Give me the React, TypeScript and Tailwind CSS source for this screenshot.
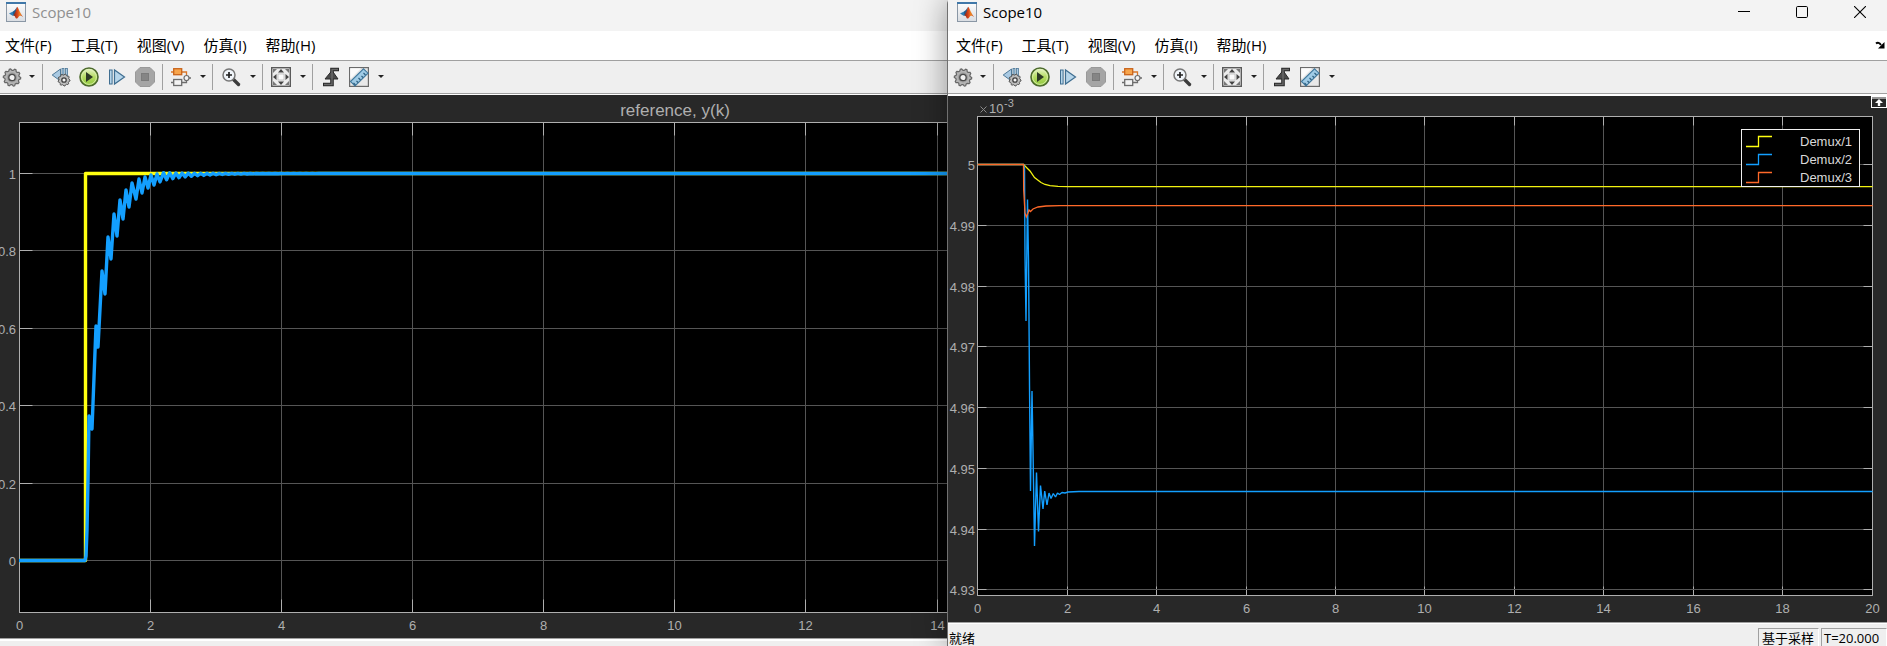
import type { ReactNode } from "react";

const UI_FONT = "font-['Open_Sans','Noto_Sans_CJK_SC',sans-serif]";
const CHART_FONT = "font-['Liberation_Sans',sans-serif]";

/* ---------- icons ---------- */

function MatlabIcon() {
  return (
    <svg width="20" height="20" viewBox="0 0 20 20" aria-hidden="true">
      <defs>
        <linearGradient id="ml-bg" x1="0" y1="0" x2="0" y2="1">
          <stop offset="0" stopColor="#fdfdfd" />
          <stop offset="1" stopColor="#d9dde2" />
        </linearGradient>
        <linearGradient id="ml-peak" x1="0" y1="0" x2="1" y2="0">
          <stop offset="0" stopColor="#7c1f12" />
          <stop offset="0.45" stopColor="#d9481c" />
          <stop offset="0.7" stopColor="#f08a24" />
          <stop offset="1" stopColor="#b5311a" />
        </linearGradient>
      </defs>
      <rect x="0.5" y="0.5" width="19" height="19" fill="url(#ml-bg)" stroke="#8a97a5" />
      <rect x="0" y="0" width="20" height="2" fill="#3f77a8" />
      <path d="M3 11.5 L7 9.5 L9 11.5 L7 14 Z" fill="#2f7fb5" />
      <path d="M7 9.5 Q9 8.5 11 5 L10 11 L8 13.5 L7 12 Z" fill="#255c8c" />
      <path d="M11.2 4.8 C12.8 6.5 14 11.5 17 14.8 C14.5 13 13.5 13.5 12.5 15 C11 17.5 9.8 16.8 9.2 15 C8.8 13.8 8 13.5 7 14 C9 12 10 8 11.2 4.8 Z" fill="url(#ml-peak)" />
    </svg>
  );
}

function gearPath(cx: number, cy: number, r: number, depth: number, teeth: number) {
  const pts: string[] = [];
  for (let i = 0; i < teeth * 4; i++) {
    const a = (i / (teeth * 4)) * Math.PI * 2;
    const rad = i % 4 < 2 ? r : r - depth;
    pts.push(`${(cx + Math.cos(a) * rad).toFixed(2)} ${(cy + Math.sin(a) * rad).toFixed(2)}`);
  }
  return `M${pts.join("L")}Z`;
}

function GearIcon() {
  return (
    <svg width="20" height="20" viewBox="0 0 20 20" aria-hidden="true">
      <path d={gearPath(10, 10.5, 8.7, 1.5, 10)} fill="#b4b4b4" stroke="#666" strokeWidth="1.2" />
      <circle cx="10" cy="10.5" r="5" fill="#9c9c9c" />
      <circle cx="10" cy="10.5" r="3.2" fill="#f1f1f1" stroke="#4a4a4a" strokeWidth="1.3" />
    </svg>
  );
}

function StepBackIcon() {
  return (
    <svg width="20" height="20" viewBox="0 0 20 20" aria-hidden="true">
      <path d="M9.5 2 V14 L1.2 8 Z" fill="#a9c9e2" stroke="#4d7897" />
      <rect x="11" y="1.5" width="2" height="9" fill="#a9c9e2" stroke="#4d7897" strokeWidth="0.8" />
      <rect x="14.5" y="1.5" width="2" height="9" fill="#a9c9e2" stroke="#4d7897" strokeWidth="0.8" />
      <path d={gearPath(13, 13, 6, 1, 9)} fill="#bcbcbc" stroke="#555" />
      <circle cx="13" cy="13" r="2.2" fill="#f5f5f5" stroke="#3f3f3f" strokeWidth="1.3" />
    </svg>
  );
}

function RunIcon() {
  return (
    <svg width="20" height="20" viewBox="0 0 20 20" aria-hidden="true">
      <defs>
        <linearGradient id="run-fill" x1="0" y1="0" x2="0" y2="1">
          <stop offset="0" stopColor="#eaf6cf" />
          <stop offset="0.5" stopColor="#b4dc62" />
          <stop offset="1" stopColor="#8cc63a" />
        </linearGradient>
      </defs>
      <circle cx="10" cy="10" r="9" fill="url(#run-fill)" stroke="#4d6b2d" strokeWidth="1.6" />
      <circle cx="10" cy="10" r="7.4" fill="none" stroke="#dff2b5" strokeWidth="0.8" />
      <path d="M7 5 V15 L14 10 Z" fill="#2e3a26" />
    </svg>
  );
}

function StepForwardIcon() {
  return (
    <svg width="20" height="20" viewBox="0 0 20 20" aria-hidden="true">
      <rect x="2.5" y="3" width="2.6" height="14" fill="#b6d5ea" stroke="#3f6e91" />
      <path d="M7.5 3 V17 L17.5 10 Z" fill="#b6d5ea" stroke="#3f6e91" strokeWidth="1.2" />
    </svg>
  );
}

function StopIcon() {
  return (
    <svg width="20" height="20" viewBox="0 0 20 20" aria-hidden="true">
      <path d="M5 0.5 H15 L19.5 5 V15 L15 19.5 H5 L0.5 15 V5 Z" fill="#a5a5a5" stroke="#999" />
      <rect x="6.5" y="6.5" width="7" height="7" fill="#858585" stroke="#7b7b7b" />
    </svg>
  );
}

function SignalIcon() {
  return (
    <svg width="20" height="20" viewBox="0 0 20 20" aria-hidden="true">
      <path d="M0 5 H3 M10 5 H15.5 V9" fill="none" stroke="#d9772a" strokeWidth="1.3" />
      <path d="M0 15.5 H3 M10 15.5 H15.5 V13 M18 11 H20" fill="none" stroke="#6d6d6d" strokeWidth="1.3" />
      <rect x="2.7" y="1.7" width="8" height="6" fill="#f7a54c" stroke="#c9641c" strokeWidth="1.3" />
      <rect x="2.7" y="12.5" width="8" height="6" fill="#f3f3f3" stroke="#6d6d6d" strokeWidth="1.3" />
      <circle cx="15.5" cy="11" r="2.5" fill="#f3f3f3" stroke="#6d6d6d" strokeWidth="1.2" />
    </svg>
  );
}

function ZoomIcon() {
  return (
    <svg width="20" height="20" viewBox="0 0 20 20" aria-hidden="true">
      <path d="M12.5 12.5 L17.5 17.5" stroke="#3c3c3c" strokeWidth="3.4" strokeLinecap="round" />
      <circle cx="8" cy="8" r="6" fill="#f0f5fa" stroke="#777" strokeWidth="1.5" />
      <path d="M5 8 H11 M8 5 V11" stroke="#222" strokeWidth="1.7" />
    </svg>
  );
}

function FitIcon() {
  return (
    <svg width="20" height="20" viewBox="0 0 20 20" aria-hidden="true">
      <rect x="0.7" y="0.7" width="18.6" height="18.6" fill="#ececec" stroke="#5a5a5a" strokeWidth="1.4" />
      <path d="M10 2 L13 5.5 H7 Z M10 18 L13 14.5 H7 Z M2 10 L5.5 7 V13 Z M18 10 L14.5 7 V13 Z" fill="#444" />
      <path d="M2 2 H6 L2 6 Z M18 2 H14 L18 6 Z M2 18 H6 L2 14 Z M18 18 H14 L18 14 Z" fill="#777" />
      <rect x="7" y="7" width="6" height="6" fill="#fafafa" stroke="#bbb" strokeWidth="0.8" />
    </svg>
  );
}

function TriggerIcon() {
  return (
    <svg width="20" height="20" viewBox="0 0 20 20" aria-hidden="true">
      <path d="M2 17.5 H11 V2.5 H18" fill="none" stroke="#2a2a2a" strokeWidth="3.6" />
      <path d="M11 3.5 L17 12 H4 Z" fill="#4a4a4a" stroke="#2a2a2a" />
      <path d="M3 17.5 H11 V2.5 H17" fill="none" stroke="#6a6a6a" strokeWidth="1.4" />
    </svg>
  );
}

function RulerIcon() {
  return (
    <svg width="20" height="20" viewBox="0 0 20 20" aria-hidden="true">
      <rect x="0.6" y="0.6" width="18.8" height="18.8" fill="#e9e9e9" stroke="#6b6b6b" strokeWidth="1.2" />
      <path d="M1.2 1.2 H12 L1.2 12 Z" fill="#fbfbfb" />
      <path d="M1.5 14.5 L14.5 1.8 L19 6.2 L6 19 Z" fill="#9fcbe6" stroke="#41799d" strokeWidth="1.1" />
      <path d="M6.5 18 L4.5 16 M9 15.5 L7.5 14 M11.5 13 L9.5 11 M14 10.5 L12.5 9 M16.5 8 L14.5 6" stroke="#2c5d7d" strokeWidth="1.1" />
    </svg>
  );
}

/* ---------- toolbar ---------- */

function Tool({ label, gear, children }: { label: string; gear?: boolean; children: ReactNode }) {
  return (
    <button type="button" aria-label={label} className={`flex h-7 items-center justify-center ${gear ? "w-6" : "w-7"}`}>
      {children}
    </button>
  );
}

function Caret({ label }: { label: string }) {
  return (
    <button type="button" aria-label={label} className="flex h-7 w-4 items-center justify-center">
      <svg width="6" height="3" viewBox="0 0 6 3" aria-hidden="true">
        <path d="M0 0 H6 L3 3 Z" fill="#222" />
      </svg>
    </button>
  );
}

function Separator() {
  return <span className="ml-px mr-1 h-[26px] w-px bg-[#a0a0a0]" />;
}

function Toolbar({ inset }: { inset: string }) {
  return (
    <div className={`flex h-[31px] items-center bg-[#efefef] ${inset}`}>
      <div className="flex pr-px">
        <Tool label="配置属性" gear><GearIcon /></Tool>
        <Caret label="配置选项" />
      </div>
      <Separator />
      <div className="flex pr-0.5">
        <Tool label="步退选项"><StepBackIcon /></Tool>
        <Tool label="运行"><RunIcon /></Tool>
        <Tool label="步进"><StepForwardIcon /></Tool>
        <Tool label="停止"><StopIcon /></Tool>
      </div>
      <Separator />
      <Tool label="信号"><SignalIcon /></Tool>
      <Caret label="信号选项" />
      <Separator />
      <Tool label="放大"><ZoomIcon /></Tool>
      <Caret label="缩放选项" />
      <Separator />
      <Tool label="缩放至合适大小"><FitIcon /></Tool>
      <Caret label="自动缩放选项" />
      <Separator />
      <Tool label="触发"><TriggerIcon /></Tool>
      <Tool label="测量"><RulerIcon /></Tool>
      <Caret label="测量选项" />
    </div>
  );
}

/* ---------- window chrome ---------- */

const MENUS = ["文件(F)", "工具(T)", "视图(V)", "仿真(I)", "帮助(H)"];

function TitleBar({ inset, tone, children }: { inset: string; tone: string; children?: ReactNode }) {
  return (
    <header className={`flex h-[31px] justify-between bg-[#f3f3f3] ${inset}`}>
      <div className="flex h-6 items-center gap-1.5">
        <MatlabIcon />
        <h1 className={`text-[15px] leading-5 ${tone}`}>Scope10</h1>
      </div>
      {children}
    </header>
  );
}

function MenuBar({ inset, children }: { inset: string; children?: ReactNode }) {
  return (
    <nav className={`flex h-[29px] items-center justify-between bg-white pb-0.5 ${inset}`}>
      <div className="flex gap-[19px]">
        {MENUS.map((m) => (
          <button key={m} type="button" className="text-[15px] leading-6 text-black">{m}</button>
        ))}
      </div>
      {children}
    </nav>
  );
}

function WindowButtons() {
  return (
    <div className="-mr-0.5 flex h-6">
      <button type="button" aria-label="最小化" className="flex w-[58px] items-center justify-center">
        <svg width="12" height="12" viewBox="0 0 12 12"><path d="M0 5.5 H12" stroke="#000" /></svg>
      </button>
      <button type="button" aria-label="最大化" className="flex w-[58px] items-center justify-center">
        <svg width="12" height="12" viewBox="0 0 12 12"><rect x="0.5" y="0.5" width="11" height="11" rx="1.2" fill="none" stroke="#000" /></svg>
      </button>
      <button type="button" aria-label="关闭" className="flex w-[58px] items-center justify-center">
        <svg width="12" height="12" viewBox="0 0 12 12"><path d="M0 0 L12 12 M12 0 L0 12" stroke="#000" strokeWidth="1.1" /></svg>
      </button>
    </div>
  );
}

/* ---------- charts ---------- */

const AXIS = "#afafaf";
const GRID = "#555555";

type Tick = { at: number; label: string };

type FrameProps = {
  left: number;
  right: number;
  top: number;
  bottom: number;
  xTicks: Tick[];
  yTicks: Tick[];
  tick: number;
  yLabelX: number;
  xLabelY: number;
};

function AxesFrame({ left, right, top, bottom, xTicks, yTicks, tick, yLabelX, xLabelY }: FrameProps) {
  return (
    <g fontSize="13" fill={AXIS}>
      <rect x={left} y={top} width={right - left} height={bottom - top} fill="#000" />
      {xTicks.map((t) => (
        <g key={t.at}>
          <path d={`M${t.at} ${top} V${bottom}`} stroke={GRID} />
          <path d={`M${t.at} ${top} v${tick} M${t.at} ${bottom} v${-tick}`} stroke={AXIS} />
          <text x={t.at} y={xLabelY} textAnchor="middle">{t.label}</text>
        </g>
      ))}
      {yTicks.map((t) => (
        <g key={t.at}>
          <path d={`M${left} ${t.at} H${right}`} stroke={GRID} />
          <path d={`M${left} ${t.at} h${tick} M${right} ${t.at} h${-tick}`} stroke={AXIS} />
          <text x={yLabelX} y={t.at + 5} textAnchor="end">{t.label}</text>
        </g>
      ))}
      <rect x={left} y={top} width={right - left} height={bottom - top} fill="none" stroke={AXIS} />
    </g>
  );
}

const LEFT_X: Tick[] = [
  { at: 19.5, label: "0" }, { at: 150.5, label: "2" }, { at: 281.5, label: "4" }, { at: 412.5, label: "6" },
  { at: 543.5, label: "8" }, { at: 674.5, label: "10" }, { at: 805.5, label: "12" }, { at: 937.5, label: "14" },
];
const LEFT_Y: Tick[] = [
  { at: 173.5, label: "1" }, { at: 250.5, label: "0.8" }, { at: 328.5, label: "0.6" },
  { at: 405.5, label: "0.4" }, { at: 483.5, label: "0.2" }, { at: 560.5, label: "0" },
];

/* Upper and lower turning points of the output's ripple: x, y, x, y */
const RIPPLE = [
  [89, 416, 92, 429], [96, 326, 98, 347], [102, 271, 105, 294], [108, 237, 111, 259],
  [114, 214, 117, 236], [120, 200, 123, 219], [126, 190, 129, 207], [132, 183, 136, 199],
  [139, 179, 142, 193], [145, 177, 148, 188], [151, 175, 154, 185], [157, 174, 160, 182],
];

function responsePath() {
  let d = "M19 560.5 H85 L86 556 L87 530 L88 480";
  for (const [x1, y1, x2, y2] of RIPPLE) d += ` L${x1} ${y1} L${x2} ${y2}`;
  for (let i = 0; i < 26; i++) {
    const x = 163.5 + i * 6.2;
    const k = Math.exp(-i / 5);
    const mid = 173.5 + 2.8 * k;
    d += ` L${x.toFixed(1)} ${(mid - 3.6 * k).toFixed(1)} L${(x + 3.1).toFixed(1)} ${(mid + 3.4 * k).toFixed(1)}`;
  }
  return `${d} H947`;
}

function ResponseChart() {
  return (
    <svg viewBox="0 95 947 543" className={`block h-auto w-full bg-[#282828] ${CHART_FONT}`} role="img" aria-label="reference, y(k)">
      <text x="675" y="116" textAnchor="middle" fontSize="17" fill={AXIS}>reference, y(k)</text>
      <AxesFrame left={19.5} right={1330} top={122.5} bottom={612.5} xTicks={LEFT_X} yTicks={LEFT_Y} tick={13} yLabelX={16} xLabelY={630} />
      <path d="M19 560.5 H85.5 V173.5 H947" fill="none" stroke="#ffff11" strokeWidth="3.4" strokeLinejoin="round" />
      <path d={responsePath()} fill="none" stroke="#139fff" strokeWidth="3.4" strokeLinejoin="round" />
    </svg>
  );
}

const RIGHT_X: Tick[] = [
  { at: 977.5, label: "0" }, { at: 1067.5, label: "2" }, { at: 1156.5, label: "4" }, { at: 1246.5, label: "6" },
  { at: 1335.5, label: "8" }, { at: 1424.5, label: "10" }, { at: 1514.5, label: "12" }, { at: 1603.5, label: "14" },
  { at: 1693.5, label: "16" }, { at: 1782.5, label: "18" }, { at: 1872.5, label: "20" },
];
const RIGHT_Y: Tick[] = [
  { at: 164.5, label: "5" }, { at: 225.5, label: "4.99" }, { at: 286.5, label: "4.98" }, { at: 346.5, label: "4.97" },
  { at: 407.5, label: "4.96" }, { at: 468.5, label: "4.95" }, { at: 529.5, label: "4.94" }, { at: 589.5, label: "4.93" },
];

const DEMUX_1 = "977.5,164.5 1023.5,164.5 1028,169 1030,171 1034.5,177.5 1041,182.5 1045,184.5 1050,185.7 1058,186.3 1068,186.6 1872.5,186.6";
const DEMUX_2 = "977.5,164.5 1023.5,164.5 1024.5,168 1025,255 1026,321 1027.5,199.5 1028.5,260 1029,320 1029.5,385 1030.5,491 1032,391 1033,450 1034.5,546 1036.5,472.5 1038.5,531.5 1040.5,485.5 1043,509 1044.7,491 1047,505 1049,493 1051,498.5 1053.3,493.5 1055.5,497 1057.5,493 1059.5,494.5 1062,492.5 1065,493 1068,492 1079,491.5 1872.5,491.5";
const DEMUX_3 = "977.5,164.5 1023.5,164.5 1023.7,190 1025,213 1026.3,217 1028,213 1029,210 1030.5,211.5 1033,209 1038,207 1046,206 1060,205.6 1872.5,205.6";

const LEGEND = [
  { name: "Demux/1", color: "#ffff11", y: 146 },
  { name: "Demux/2", color: "#139fff", y: 164 },
  { name: "Demux/3", color: "#ff6929", y: 182 },
];

function DemuxChart() {
  return (
    <svg viewBox="948 96 939 526" className={`block h-auto w-full bg-[#282828] ${CHART_FONT}`} role="img" aria-label="Demux">
      <g fill={AXIS} fontSize="13">
        <path d="M980.5 106.5 l6 6 m0 -6 l-6 6" stroke="#8a8a8a" />
        <text x="989" y="113">10</text>
        <text x="1004" y="107" fontSize="11">-3</text>
      </g>
      <AxesFrame left={977.5} right={1872.5} top={116.5} bottom={595.5} xTicks={RIGHT_X} yTicks={RIGHT_Y} tick={9} yLabelX={975} xLabelY={613} />
      <g fill="none">
        <polyline points={DEMUX_1} stroke="#f2f210" strokeWidth="1.3" />
        <polyline points={DEMUX_2} stroke="#139fff" strokeWidth="1.4" strokeLinejoin="bevel" />
        <polyline points={DEMUX_3} stroke="#ff6929" strokeWidth="1.3" />
      </g>
      <rect x="1741.5" y="129.5" width="118" height="57" fill="#000" stroke="#f0f0f0" />
      {LEGEND.map((l) => (
        <g key={l.name}>
          <path d={`M1746 ${l.y + 0.5} H1758.5 V${l.y - 9.5} H1772`} fill="none" stroke={l.color} strokeWidth="1.3" />
          <text x="1800" y={l.y} fontSize="13" fill="#d9d9d9">{l.name}</text>
        </g>
      ))}
    </svg>
  );
}

/* ---------- page ---------- */

export default function App() {
  return (
    <main className={`grid min-h-screen grid-cols-[947fr_940fr] overflow-hidden bg-[#efefef] ${UI_FONT}`}>
      <section className="flex min-w-0 flex-col">
        <TitleBar inset="pl-1.5" tone="text-[#8f8f8f]" />
        <MenuBar inset="pl-[5px]" />
        <div className="border-y border-[#a0a0a0] pb-px">
          <Toolbar inset="pl-0" />
        </div>
        <div className="border-t border-white">
          <ResponseChart />
        </div>
        <footer className="flex-1 border-t border-[#a0a0a0] bg-[#efefef]">
          <div className="h-0.5 bg-white" />
        </footer>
      </section>

      <section className="relative z-10 flex min-w-0 flex-col rounded-tl-sm border-l border-[#707070] bg-[#efefef] shadow-[0_0_32px_rgba(0,0,0,0.4)]">
        <TitleBar inset="pl-[9px]" tone="text-black">
          <WindowButtons />
        </TitleBar>
        <MenuBar inset="pl-2 pr-0.5">
          <button type="button" aria-label="停靠" className="flex h-4 w-2.5 items-center">
            <svg width="10" height="8" viewBox="0 0 10 8"><path d="M1 2.5 Q3.5 0.5 6 4" fill="none" stroke="#000" strokeWidth="2" /><path d="M9.5 1 V7.5 H3 Z" fill="#000" /></svg>
          </button>
        </MenuBar>
        <div className="border-y border-[#a0a0a0] pb-px">
          <Toolbar inset="pl-[3px]" />
        </div>
        <div className="relative border-t-2 border-white">
          <DemuxChart />
          <button type="button" aria-label="最大化坐标区" className="absolute right-0 top-0">
            <svg width="16" height="12" viewBox="0 0 16 12">
              <rect x="0.5" y="0.5" width="15" height="11" fill="#2a2a2a" stroke="#fff" />
              <path d="M1 2 H15" stroke="#bbb" strokeWidth="1.5" />
              <path d="M8 3 L12 7 H9.2 V10 H6.8 V7 H4 Z" fill="#fff" />
            </svg>
          </button>
        </div>
        <footer className="flex flex-1 justify-between border-t border-[#a0a0a0] text-[13px] leading-4 text-black">
          <p className="flex-1 border-t border-white pl-px pt-1.5">就绪</p>
          <div className="flex gap-0.5 border-t border-white pt-1">
            <p className="w-[61px] border-l border-t border-r border-[#a0a0a0] border-r-white pl-[3px] pt-px">基于采样</p>
            <p className="w-[66px] border-l border-t border-r border-[#a0a0a0] border-r-white pl-0.5 pt-px">T=20.000</p>
          </div>
        </footer>
      </section>
    </main>
  );
}
